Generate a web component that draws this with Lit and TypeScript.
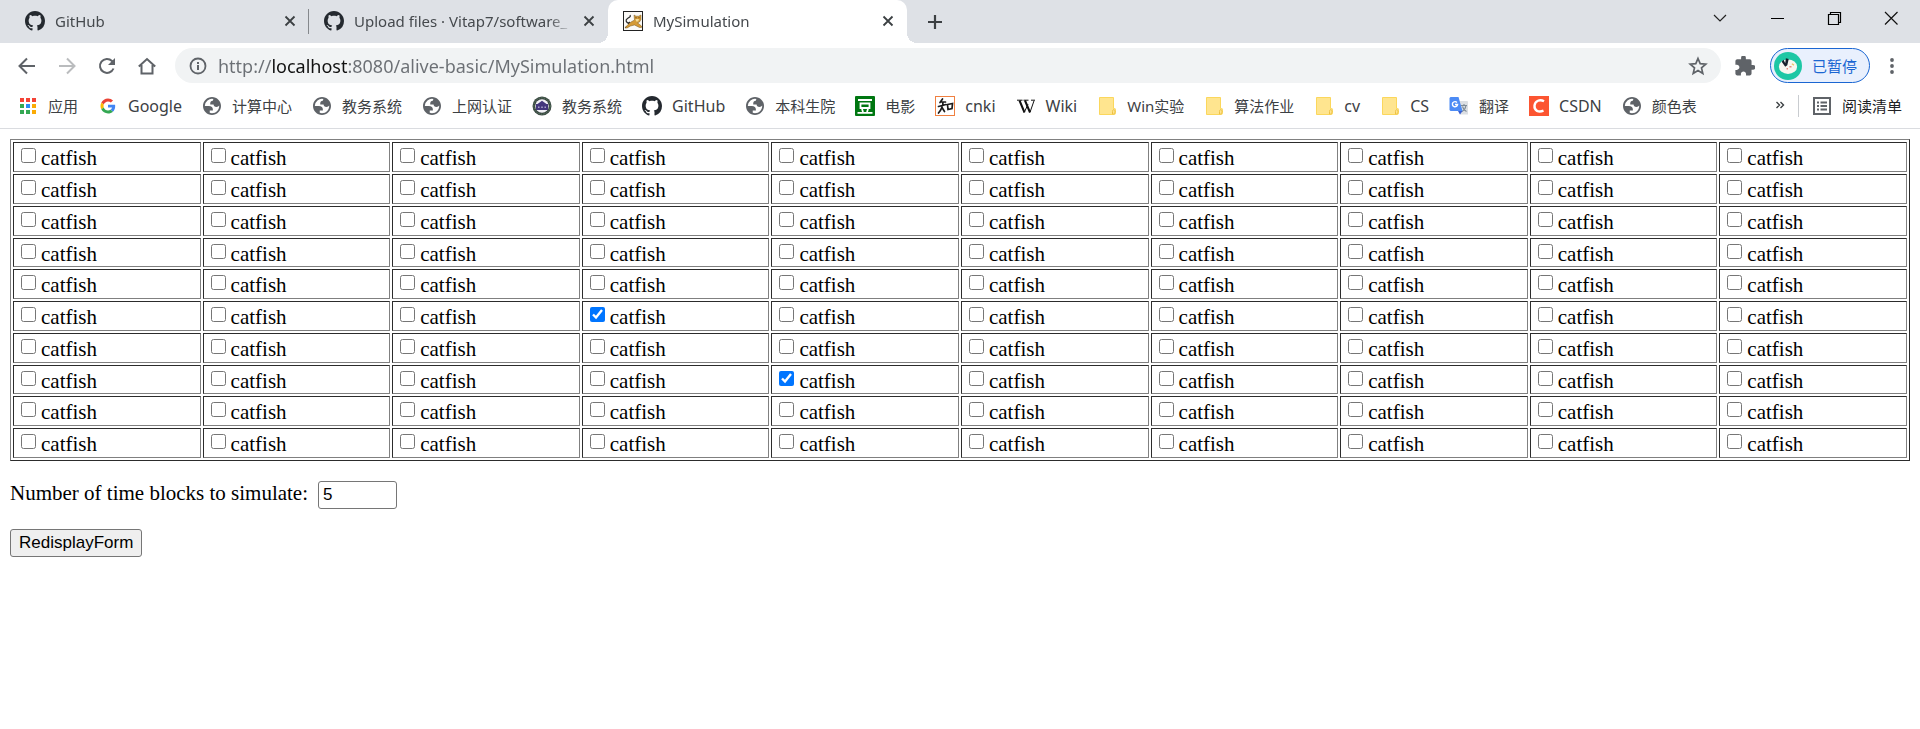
import { LitElement, html, css, svg, TemplateResult } from "lit";
import { customElement, property, state } from "lit/decorators.js";
import { classMap } from "lit/directives/class-map.js";

const octocat =
  "M8 0C3.58 0 0 3.58 0 8c0 3.54 2.29 6.53 5.47 7.59.4.07.55-.17.55-.38 0-.19-.01-.82-.01-1.49-2.01.37-2.53-.49-2.69-.94-.09-.23-.48-.94-.82-1.13-.28-.15-.68-.52-.01-.53.63-.01 1.08.58 1.23.82.72 1.21 1.87.87 2.33.66.07-.52.28-.87.51-1.07-1.78-.2-3.64-.89-3.64-3.95 0-.87.31-1.59.82-2.15-.08-.2-.36-1.02.08-2.12 0 0 .67-.21 2.2.82.64-.18 1.32-.27 2-.27.68 0 1.36.09 2 .27 1.53-1.04 2.2-.82 2.2-.82.44 1.1.16 1.92.08 2.12.51.56.82 1.27.82 2.15 0 3.07-1.87 3.75-3.65 3.95.29.25.54.73.54 1.48 0 1.07-.01 1.93-.01 2.2 0 .21.15.46.55.38A8.013 8.013 0 0 0 16 8c0-4.42-3.58-8-8-8z";

/* Every glyph is drawn on a 20x20 grid. */
const icons: Record<string, TemplateResult> = {
  github: svg`<path transform="scale(1.25)" fill="#24292f" d=${octocat} />`,
  apps: svg`
    <g fill="#f44336"><path d="M2 2h4v4H2zM8 2h4v4H8zM14 2h4v4h-4z"/></g>
    <path fill="#34a853" d="M2 8h4v4H2zM2 14h4v4H2z"/><path fill="#2a8cf5" d="M8 8h4v4H8z"/>
    <path fill="#34a853" d="M8 14h4v4H8z"/><path fill="#fbab04" d="M14 8h4v4h-4zM14 14h4v4h-4z"/>`,
  google: svg`<g transform="translate(2.5 2.5) scale(.3125)">
    <path fill="#ea4335" d="M24 9.5c3.54 0 6.71 1.22 9.21 3.6l6.85-6.85C35.9 2.38 30.47 0 24 0 14.62 0 6.51 5.38 2.56 13.22l7.98 6.19C12.43 13.72 17.74 9.5 24 9.5z"/>
    <path fill="#4285f4" d="M46.98 24.55c0-1.57-.15-3.09-.38-4.55H24v9.02h12.94c-.58 2.96-2.26 5.48-4.78 7.18l7.73 6c4.51-4.18 7.09-10.36 7.09-17.65z"/>
    <path fill="#fbbc05" d="M10.53 28.59c-.48-1.45-.76-2.99-.76-4.59s.27-3.14.76-4.59l-7.98-6.19C.92 16.46 0 20.12 0 24c0 3.88.92 7.54 2.56 10.78l7.97-6.19z"/>
    <path fill="#34a853" d="M24 48c6.48 0 11.93-2.13 15.89-5.81l-7.73-6c-2.15 1.45-4.92 2.3-8.16 2.3-6.26 0-11.57-4.22-13.47-9.91l-7.98 6.19C6.51 42.62 14.62 48 24 48z"/></g>`,
  globe: svg`<path transform="translate(-.8 -.8) scale(.9)" fill="#5f6368" fill-rule="evenodd" d="M12 22C6.477 22 2 17.523 2 12S6.477 2 12 2s10 4.477 10 10-4.477 10-10 10zM4 12h4.400c3.407.022 4.922 1.730 4.543 5.127H9.488v2.470a8.004 8.004 0 0 0 10.498-8.083C19.327 12.504 18.332 13 17 13c-2.137 0-3.206-.916-3.206-2.750h-3.748c-.274-2.728.683-4.092 2.870-4.092 0-.975.327-1.597.811-1.970A8.004 8.004 0 0 0 4 12z"/>`,
  badge: svg`<circle cx="10" cy="10" r="9.500" fill="#38443f"/>
    <circle cx="10" cy="10" r="8.200" fill="none" stroke="#5f8468" stroke-width="1" stroke-dasharray="1.500 1"/>
    <circle cx="10" cy="10" r="6.800" fill="#f1f1f6"/>
    <path fill="#43377d" d="M10 4.800l4.500 3.200H16v1.500H4V8h1.500zM4 9.500h12v4.500H4z"/><path fill="#a9a3cb" d="M6 10.500h1.500V12H6zm3.200 0h1.600V12H9.200zm3.300 0H14V12h-1.500z"/>`,
  douban: svg`<rect width="20" height="20" rx="1" fill="#007711"/>
    <path fill="none" stroke="#fff" stroke-width="1.800" d="M3 4h14M5.500 7.500h9v4.500h-9zM7 13l1 3M13 13l-1 3M2.500 16.800h15"/>`,
  cnki: svg`<rect x=".5" y=".5" width="19" height="19" fill="#fff" stroke="#f08040"/>
    <path fill="none" stroke="#1c1c1c" stroke-width="1.700" stroke-linecap="round" d="M7.500 3L5 6.500M5.500 6h5M3.500 10.500l7.500-2M8 6c0 5-1.500 7.500-4.500 11M7 11.500l2.500 4M12.500 8.500l.5 5 4-1 .5-5-5 1"/>`,
  wiki: svg`<path fill="none" stroke="#111" stroke-width="2" d="M3.500 4.500l5 12M9 4.500l5 12"/>
    <path fill="none" stroke="#111" stroke-width="1" d="M8.300 16.300l3.700-8M14 16.300l4-11.500M1 4.200h5.500M7.500 4.200h5M15 4.200h4"/>`,
  folder: svg`<path fill="#ffe58f" stroke="#fbd75c" d="M2.500 1.500h14v11c2 0 2 0 2 2v2c0 2-.5 2-2 2h-14z"/>
    <path fill="#ffe58f" stroke="#eec143" d="M15.500 18v-2.500c0-2.500 2.500-2.500 2.500 0 0 2-1 3-2.500 2.500"/>`,
  translate: svg`<path fill="#dcdfe3" d="M8 5h10.500l.5 1v12.500H11z"/>
    <path stroke="#7d8a96" fill="none" stroke-width="1.100" d="M12 9.500h6M15 8v1.500M17 9.500c-.5 3-2 5-4 6M13.500 10.500c.5 2 2 4 4 5"/>
    <path fill="#4c8bf5" d="M1.500 1h8l4 14H1.500L.5 14V2z"/><path fill="#3a5fd0" d="M9 15h4.500L11 18.500z"/>
    <path fill="none" stroke="#fff" stroke-width="1.400" d="M8 6.500a2.600 2.600 0 1 0 .6 2H6"/>`,
  csdn: svg`<rect width="20" height="20" fill="#fc5531"/><path fill="none" stroke="#fff" stroke-width="2.400" d="M15 5.200c-4-2.200-9-.5-9.500 4.500-.4 5 4 7 9 5"/>`,
  reading: svg`<path fill="none" stroke="#5f6368" stroke-width="2" d="M2 2h16v16H2z"/>
    <path fill="#5f6368" d="M5 5.500h2v2H5zm0 3.500h2v2H5zm0 3.500h2v2H5zM8.500 5.500H15v2H8.500zm0 3.500H15v2H8.500zm0 3.500H15v2H8.500z"/>`,
  tomcat: svg`<rect x=".5" y=".5" width="19" height="19" fill="#fbfaf7" stroke="#222"/>
    <path fill="none" stroke="#2b2b2b" stroke-width="1.200" d="M6 12.500c-3-1-4-3.500-1.500-5S8 5.500 7 4M2 16.500l3-1M5 13l2-2"/>
    <path fill="#d59a35" stroke="#7a5a22" stroke-width=".5" d="M11 4l2 1.200h2.500L18 4v4.500l-1.500 2.500-2 .8 4 3.200v1.500h-2L11.500 14l-4 1-3.500 2H2l3-3.500 3-2.500 3.500-2z"/>
    <path fill="#f4dc94" d="M12.500 8h3.500l-.8 2.500h-2z"/><path fill="#4a3a18" d="M12.500 6.200h1v1h-1zM15.500 6.200h1v1h-1z"/>`,
  close: svg`<path fill="none" stroke="#3c4043" stroke-width="2" d="M5 5l10 10M15 5L5 15"/>`,
  plus: svg`<path fill="none" stroke="#3c4043" stroke-width="2.200" d="M10 3v14M3 10h14"/>`,
  back: svg`<path fill="none" stroke="#5f6368" stroke-width="2" d="M18 10H3M10 2.500L2.500 10l7.500 7.500"/>`,
  forward: svg`<path fill="none" stroke="#babcbe" stroke-width="2" d="M2 10h15M10 2.500l7.500 7.500-7.500 7.500"/>`,
  reload: svg`<path fill="none" stroke="#5f6368" stroke-width="2" d="M16.500 12.500A7 7 0 1 1 15 5l1.500 1.500"/><path fill="#5f6368" d="M18 2v7h-7z"/>`,
  home: svg`<path fill="none" stroke="#5f6368" stroke-width="2" d="M1.800 10.500L10 3l8.200 7.500M4.500 9v8.500h11V9"/>`,
  info: svg`<circle cx="10" cy="10" r="7.500" fill="none" stroke="#5f6368" stroke-width="1.800"/><path fill="#5f6368" d="M9 9h2v5H9zM9 6h2v2H9z"/>`,
  star: svg`<path fill="none" stroke="#5f6368" stroke-width="1.700" d="M10 2.500l2.200 5.200 5.600.5-4.300 3.700 1.300 5.500-4.800-2.900-4.800 2.900 1.300-5.500L2.200 8.200l5.600-.5z"/>`,
  puzzle: svg`<path transform="translate(-1.500 -1.500) scale(.95)" fill="#5f6368" d="M20.500 11H19V7c0-1.100-.9-2-2-2h-4V3.500a2.500 2.500 0 0 0-5 0V5H4c-1.100 0-1.990.9-1.990 2v3.800H3.500c1.490 0 2.700 1.210 2.700 2.700s-1.210 2.700-2.700 2.700H2V20c0 1.100.9 2 2 2h3.800v-1.500c0-1.490 1.210-2.700 2.700-2.700s2.700 1.210 2.700 2.700V22H17c1.100 0 2-.9 2-2v-4h1.500a2.500 2.500 0 0 0 0-5z"/>`,
  menu: svg`<g fill="#5f6368"><circle cx="10" cy="4" r="1.900"/><circle cx="10" cy="10" r="1.900"/><circle cx="10" cy="16" r="1.900"/></g>`,
  chevron: svg`<path fill="none" stroke="#222" stroke-width="1.200" d="M4 7l6 6 6-6"/>`,
  minimize: svg`<path fill="none" stroke="#000" d="M4 10.500h13"/>`,
  restore: svg`<path fill="none" stroke="#000" stroke-width="1.200" d="M4.500 6.500h10v10h-10zM6.500 6.500v-2h10v10h-2"/>`,
  exit: svg`<path fill="none" stroke="#111" stroke-width="1.200" d="M4 4l12.500 12.500M16.500 4L4 16.500"/>`,
  more: svg`<path fill="none" stroke="#3c4043" stroke-width="1.400" d="M6.500 6l3 3-3 3M10.500 6l3 3-3 3"/>`,
  avatar: svg`<circle cx="10" cy="10" r="10" fill="#1dc7a5"/><ellipse cx="10" cy="10.500" rx="6.500" ry="5.200" fill="#f7f7f0"/>
    <path fill="#15202b" d="M5.500 7l1.300-1.500L8 8l.5-3.500 2 .5-1 4.500-1.500 1z"/><path fill="#e9877e" d="M11 10h1.500v1H11zM9 11.500h1v1H9z"/><path fill="#e8c66a" d="M13 8l1.500 1-.5.800-1.500-1z"/>`,
};

const icon = (name: string) =>
  html`<svg class="icon" viewBox="0 0 20 20" aria-hidden="true">${icons[name]}</svg>`;

const iconStyles = css`
  .icon {
    display: block;
    flex: none;
    width: 20px;
    height: 20px;
  }
  button {
    display: flex;
    align-items: center;
    justify-content: center;
    padding: 0;
    border: 0;
    background: none;
    font: inherit;
  }
`;

@customElement("tab-strip")
class TabStrip extends LitElement {
  static styles = [
    iconStyles,
    css`
      :host {
        display: flex;
        height: 43px;
        padding-left: 10px;
        background: #dee1e6;
        color: #45494d;
        font-size: 15px;
      }
      .tabs {
        display: flex;
        min-width: 0;
      }
      .tab {
        position: relative;
        display: flex;
        align-items: center;
        box-sizing: border-box;
        flex: 0 1 299px;
        width: 299px;
        min-width: 60px;
        padding: 0 9px 1px 15px;
      }
      .title {
        flex: 1;
        min-width: 0;
        margin: 0 6px 0 10px;
        overflow: hidden;
        white-space: nowrap;
        mask-image: linear-gradient(to left, transparent, #000 24px);
      }
      .divided::after {
        content: "";
        position: absolute;
        right: 0;
        top: 9px;
        width: 1px;
        height: 25px;
        background: #85888c;
      }
      .active {
        border-radius: 10px 10px 0 0;
        background: #fff;
      }
      .active::before,
      .active::after {
        content: "";
        position: absolute;
        bottom: 0;
        width: 10px;
        height: 10px;
      }
      .active::before {
        right: 100%;
        background: radial-gradient(circle at 0 0, transparent 10px, #fff 10px);
      }
      .active::after {
        left: 100%;
        background: radial-gradient(circle at 100% 0, transparent 10px, #fff 10px);
      }
      .close .icon {
        width: 18px;
        height: 18px;
      }
      .close {
        width: 20px;
        height: 20px;
      }
      .add {
        width: 56px;
      }
      .window {
        display: flex;
        height: 36px;
        margin-left: auto;
        padding-right: 1px;
      }
      .window button {
        width: 57px;
      }
    `,
  ];

  render() {
    const tabs = [
      { icon: "github", title: "GitHub" },
      { icon: "github", title: "Upload files · Vitap7/software_" },
      { icon: "tomcat", title: "MySimulation" },
    ];
    return html`
      <div class="tabs">
        ${tabs.map(
          (t, i) => html`<div class=${classMap({ tab: true, active: i === 2, divided: i === 0 })}>
            ${icon(t.icon)}<span class="title">${t.title}</span>
            <button class="close" aria-label="关闭">${icon("close")}</button>
          </div>`
        )}
      </div>
      <button class="add" aria-label="打开新的标签页">${icon("plus")}</button>
      <div class="window">
        ${[
          ["chevron", "搜索标签页"],
          ["minimize", "最小化"],
          ["restore", "还原"],
          ["exit", "关闭窗口"],
        ].map(([name, label]) => html`<button aria-label=${label}>${icon(name)}</button>`)}
      </div>
    `;
  }
}

@customElement("address-toolbar")
class AddressToolbar extends LitElement {
  static styles = [
    iconStyles,
    css`
      :host {
        display: flex;
        align-items: center;
        gap: 8px;
        padding: 5px 18px 5px 7px;
      }
      .nav {
        display: flex;
      }
      .nav button {
        width: 40px;
      }
      .omnibox {
        display: flex;
        flex: 1;
        align-items: center;
        box-sizing: border-box;
        height: 35px;
        padding: 0 13px;
        border-radius: 18px;
        background: #f1f3f4;
      }
      .url {
        flex: 1;
        min-width: 0;
        margin: 0 10px;
        padding: 0;
        border: 0;
        outline: 0;
        color: #5f6368;
        font: inherit;
        font-size: 18px;
        line-height: 28px;
        background: linear-gradient(to right, #6b6f74 54px, #111 54px 130px, #6b6f74 130px);
        -webkit-background-clip: text;
        background-clip: text;
        -webkit-text-fill-color: transparent;
      }
      .extensions {
        width: 33px;
      }
      .profile {
        gap: 10px;
        box-sizing: border-box;
        height: 35px;
        padding: 0 12px 0 3px;
        border: 1px solid #1a66d2;
        border-radius: 18px;
        background: #e9f0fd;
        color: #1a66d2;
        font-size: 15px;
      }
      .profile .icon {
        width: 28px;
        height: 28px;
      }
      .menu {
        width: 20px;
        margin-left: 4px;
      }
    `,
  ];

  @property() url = "http://localhost:8080/alive-basic/MySimulation.html";

  render() {
    return html`
      <div class="nav">
        ${[
          ["back", "返回"],
          ["forward", "前进"],
          ["reload", "重新加载"],
          ["home", "主页"],
        ].map(([name, label]) => html`<button aria-label=${label}>${icon(name)}</button>`)}
      </div>
      <div class="omnibox">
        ${icon("info")}
        <input class="url" type="text" aria-label="地址和搜索栏" spellcheck="false" .value=${this.url} />
        <button aria-label="为此标签页添加书签">${icon("star")}</button>
      </div>
      <button class="extensions" aria-label="扩展程序">${icon("puzzle")}</button>
      <button class="profile">${icon("avatar")}<span>已暂停</span></button>
      <button class="menu" aria-label="菜单">${icon("menu")}</button>
    `;
  }
}

@customElement("bookmark-bar")
class BookmarkBar extends LitElement {
  static styles = [
    iconStyles,
    css`
      :host {
        display: flex;
        align-items: center;
        height: 36px;
        padding: 0 18px 4px;
        border-bottom: 1px solid #dadce0;
        color: #3c4043;
        font-size: 15px;
        line-height: 22px;
        white-space: nowrap;
      }
      .links {
        display: flex;
        flex: 1;
        gap: 20px;
        min-width: 0;
        overflow: hidden;
      }
      .item {
        display: flex;
        flex: none;
        align-items: center;
        gap: 10px;
        color: inherit;
        text-decoration: none;
      }
      .latin {
        font-size: 16px;
      }
      .more {
        width: 36px;
      }
      .reading {
        gap: 10px;
        padding-left: 13px;
        border-left: 1px solid #c9ccd0;
        color: #202124;
      }
    `,
  ];

  render() {
    const links = [
      ["apps", "应用"],
      ["google", "Google"],
      ["globe", "计算中心"],
      ["globe", "教务系统"],
      ["globe", "上网认证"],
      ["badge", "教务系统"],
      ["github", "GitHub"],
      ["globe", "本科生院"],
      ["douban", "电影"],
      ["cnki", "cnki"],
      ["wiki", "Wiki"],
      ["folder", "Win实验"],
      ["folder", "算法作业"],
      ["folder", "cv"],
      ["folder", "CS"],
      ["translate", "翻译"],
      ["csdn", "CSDN"],
      ["globe", "颜色表"],
    ];
    return html`
      <nav class="links">
        ${links.map(
          ([name, label]) => html`<a class=${classMap({ item: true, latin: /^[A-Za-z]+$/.test(label) })} href="#"
            >${icon(name)}<span>${label}</span></a
          >`
        )}
      </nav>
      <button class="more" aria-label="更多书签">${icon("more")}</button>
      <button class="reading">${icon("reading")}<span>阅读清单</span></button>
    `;
  }
}

@customElement("simulation-form")
class SimulationForm extends LitElement {
  static styles = css`
    :host {
      display: block;
      padding: 10px;
      color: #000;
      font-family: "Liberation Serif", serif;
      font-size: 21px;
      line-height: 24px;
    }
    .grid {
      width: 100%;
      table-layout: fixed;
      border: 1px solid;
      border-color: #808080 #2c2c2c #2c2c2c #808080;
      border-spacing: 2px;
    }
    .cell {
      box-sizing: border-box;
      height: 30px;
      padding: 3px 1px 0;
      border: 1px solid;
      border-color: #2c2c2c #808080 #808080 #2c2c2c;
      vertical-align: top;
    }
    .row:nth-child(4n) .cell {
      height: 29px;
    }
    .choice {
      display: flex;
      align-items: flex-start;
      gap: 5px;
    }
    .box {
      width: 15px;
      height: 15px;
      margin: 2px 0 0 6px;
    }
    .line {
      display: flex;
      align-items: baseline;
      gap: 10px;
      margin: 20px 0 0;
    }
    .blocks,
    .submit {
      box-sizing: border-box;
      height: 28px;
      border: 1px solid #767676;
      border-radius: 3px;
      color: #000;
      font-family: "Liberation Sans", Arial, sans-serif;
      font-size: 17px;
    }
    .blocks {
      width: 79px;
      padding: 0 4px;
    }
    .submit {
      padding: 0 8px;
      background: #efefef;
    }
  `;

  @state() private checked = new Set(["5-3", "7-4"]);

  private toggle(key: string) {
    const next = new Set(this.checked);
    if (!next.delete(key)) next.add(key);
    this.checked = next;
  }

  render() {
    const ten = Array.from({ length: 10 }, (_, i) => i);
    return html`
      <form @submit=${(e: Event) => e.preventDefault()}>
        <table class="grid">
          <tbody>
            ${ten.map(
              (r) => html`<tr class="row">
                ${ten.map((c) => {
                  const key = `${r}-${c}`;
                  return html`<td class="cell">
                    <label class="choice"
                      ><input
                        class="box"
                        type="checkbox"
                        .checked=${this.checked.has(key)}
                        @change=${() => this.toggle(key)}
                      />catfish</label
                    >
                  </td>`;
                })}
              </tr>`
            )}
          </tbody>
        </table>
        <p class="line">
          <label for="blocks">Number of time blocks to simulate:</label>
          <input class="blocks" id="blocks" type="text" value="5" />
        </p>
        <p class="line"><button class="submit" type="submit">RedisplayForm</button></p>
      </form>
    `;
  }
}

@customElement("app-root")
class AppRoot extends LitElement {
  static styles = css`
    :host {
      display: block;
      min-height: 100vh;
      background: #fff;
      font-family: "Noto Sans", "Noto Sans CJK SC", sans-serif;
    }
  `;

  render() {
    return html`
      <tab-strip></tab-strip>
      <address-toolbar></address-toolbar>
      <bookmark-bar></bookmark-bar>
      <simulation-form></simulation-form>
    `;
  }
}
